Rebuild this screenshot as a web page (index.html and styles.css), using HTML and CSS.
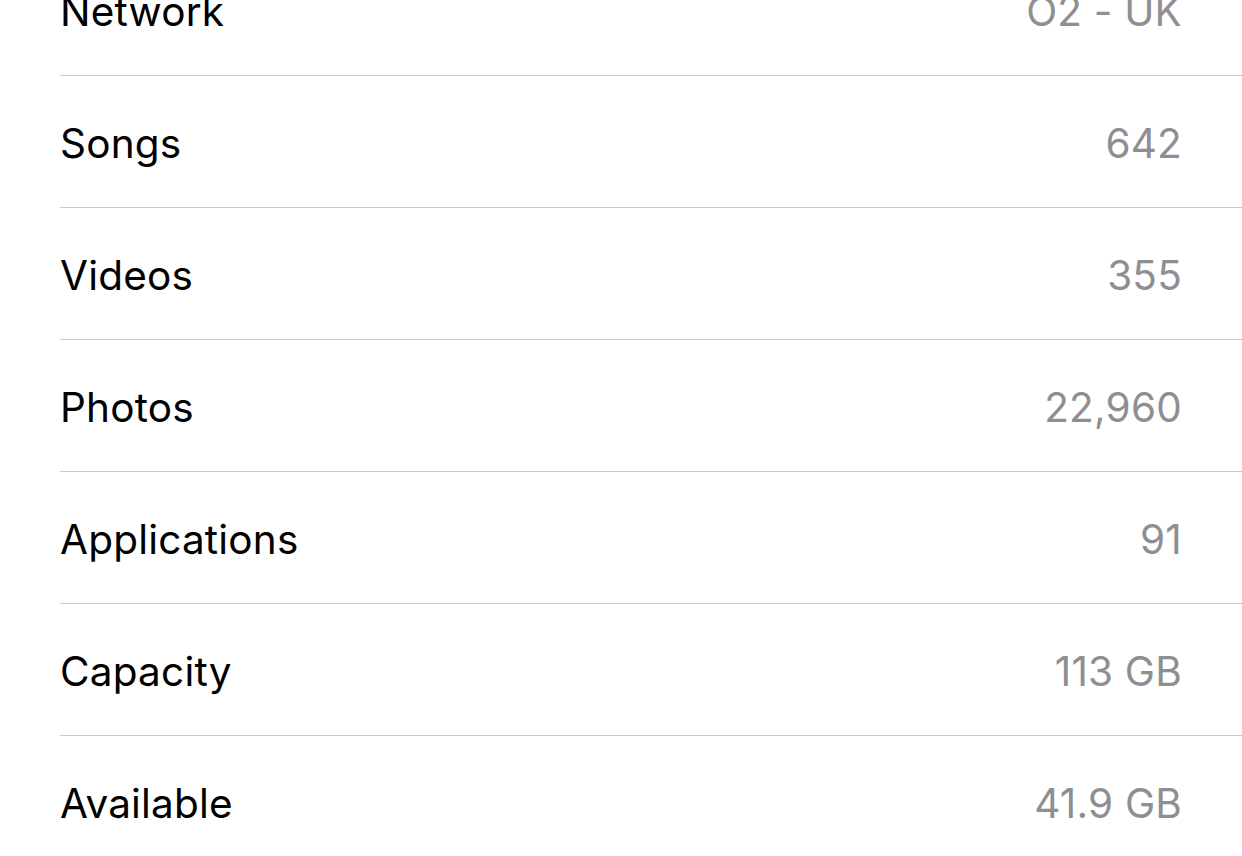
FILE: index.html
```html
<!DOCTYPE html>
<html>
<head>
<meta charset="utf-8">
<link rel="stylesheet" href="styles.css">
</head>
<body>
<ul class="list">
  <li class="row"><div class="cell"><span class="label">Network</span><span class="value">O2 - UK</span></div></li>
  <li class="row"><div class="cell"><span class="label">Songs</span><span class="value">642</span></div></li>
  <li class="row"><div class="cell"><span class="label">Videos</span><span class="value">355</span></div></li>
  <li class="row"><div class="cell"><span class="label">Photos</span><span class="value">22,960</span></div></li>
  <li class="row"><div class="cell"><span class="label">Applications</span><span class="value">91</span></div></li>
  <li class="row"><div class="cell"><span class="label">Capacity</span><span class="value">113 GB</span></div></li>
  <li class="row"><div class="cell"><span class="label">Available</span><span class="value">41.9 GB</span></div></li>
</ul>
</body>
</html>
```

FILE: styles.css
```css
html, body {
  margin: 0;
  padding: 0;
  background: #ffffff;
  overflow: hidden;
}
body {
  font-family: "Inter", "Liberation Sans", sans-serif;
  -webkit-font-smoothing: antialiased;
}
.list {
  list-style: none;
  margin: -56px 0 0 0;
  padding: 0;
}
.row {
  padding-left: 60px;
}
.cell {
  box-sizing: content-box;
  height: 128px;
  padding-top: 3px;
  padding-right: 60px;
  border-bottom: 1px solid #c8c7cc;
  display: flex;
  align-items: center;
  justify-content: space-between;
  font-size: 40.5px;
  letter-spacing: 0.2px;
}
.label {
  color: #000000;
}
.value {
  color: #8e8e93;
}
```
